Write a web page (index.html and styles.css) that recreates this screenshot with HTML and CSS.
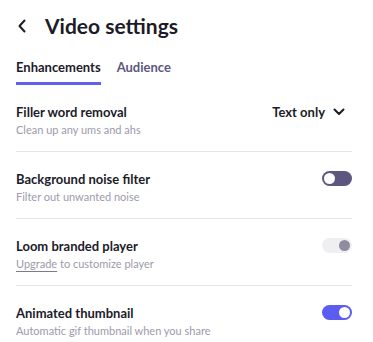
FILE: index.html
```html
<!DOCTYPE html>
<html>
<head>
<meta charset="utf-8">
<link rel="stylesheet" href="styles.css">
</head>
<body>
<div class="page">
  <header class="header">
    <svg class="back" width="10" height="14" viewBox="0 0 10 14"><path d="M7.5 1.5 L2.5 7 L7.5 12.5" fill="none" stroke="#1c1b29" stroke-width="2" stroke-linecap="round" stroke-linejoin="round"/></svg>
    <h1 class="title">Video settings</h1>
  </header>
  <nav class="tabs">
    <span class="tab active">Enhancements</span>
    <span class="tab">Audience</span>
  </nav>
  <div class="row">
    <div class="text">
      <div class="label">Filler word removal</div>
      <div class="desc">Clean up any ums and ahs</div>
    </div>
    <div class="select">Text only
      <svg width="12" height="8" viewBox="0 0 12 8"><path d="M1.5 1.5 L6 6 L10.5 1.5" fill="none" stroke="#1c1b29" stroke-width="2" stroke-linecap="round" stroke-linejoin="round"/></svg>
    </div>
  </div>
  <div class="row">
    <div class="text">
      <div class="label">Background noise filter</div>
      <div class="desc">Filter out unwanted noise</div>
    </div>
    <span class="toggle off"><span class="knob"></span></span>
  </div>
  <div class="row">
    <div class="text">
      <div class="label">Loom branded player</div>
      <div class="desc"><span class="link">Upgrade</span> to customize player</div>
    </div>
    <span class="toggle disabled"><span class="knob"></span></span>
  </div>
  <div class="row last">
    <div class="text">
      <div class="label">Animated thumbnail</div>
      <div class="desc">Automatic gif thumbnail when you share</div>
    </div>
    <span class="toggle on"><span class="knob"></span></span>
  </div>
</div>
</body>
</html>
```

FILE: styles.css
```css
* { box-sizing: border-box; }
html, body { margin: 0; background: #fff; }
body {
  font-family: Lato, "Noto Sans", sans-serif;
  color: #1c1b29;
}
.page {
  padding: 0 21px 0 16px;
}
.header {
  display: flex;
  align-items: center;
  padding-top: 14px;
  height: 38px;
}
.back {
  margin-left: 1px;
  margin-right: 18px;
  flex: none;
}
.title {
  margin: 0;
  font-size: 21px;
  line-height: 24px;
  font-weight: 700;
}
.tabs {
  display: flex;
  gap: 16px;
  margin-top: 20px;
}
.tab {
  font-size: 13px;
  line-height: 18px;
  font-weight: 700;
  color: #5c5780;
  padding-bottom: 6px;
  border-bottom: 3px solid transparent;
}
.tab.active {
  color: #1c1b29;
  border-bottom-color: #5f5ff0;
}
.row {
  display: flex;
  justify-content: space-between;
  align-items: flex-start;
  padding: 18px 0 13px;
  border-bottom: 1px solid #e6e6ea;
}
.row.last { border-bottom: none; }
.label {
  font-size: 13px;
  line-height: 18px;
  font-weight: 700;
}
.desc {
  margin-top: 1px;
  font-size: 11px;
  line-height: 16px;
  color: #9d9aab;
}
.link {
  text-decoration: underline;
  text-decoration-color: #7d7a90;
  text-underline-offset: 3px;
}
.select {
  display: flex;
  align-items: center;
  gap: 8px;
  font-size: 13px;
  line-height: 18px;
  font-weight: 700;
  margin-right: 7px;
}
.toggle {
  position: relative;
  flex: none;
  width: 30px;
  height: 15px;
  border-radius: 8px;
  margin-top: 1px;
}
.knob {
  position: absolute;
  top: 2px;
  width: 11px;
  height: 11px;
  border-radius: 50%;
}
.toggle.off { background: #5d5780; }
.toggle.off .knob { left: 2px; background: #fff; }
.toggle.disabled { background: #efeff2; }
.toggle.disabled .knob { right: 2px; background: #8f8c9f; }
.toggle.on { background: #5c5cf0; }
.toggle.on .knob { right: 2px; background: #fff; }
```
